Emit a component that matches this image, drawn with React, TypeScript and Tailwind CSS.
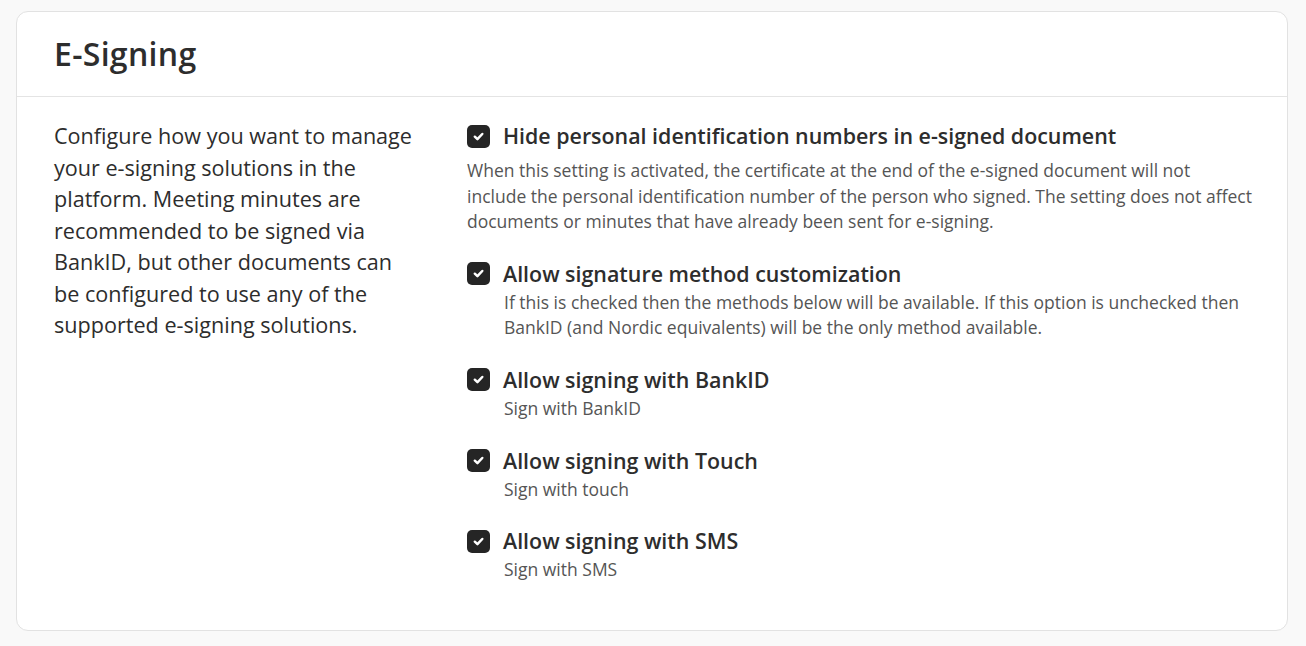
import React from "react";

const Check = () => (
  <div className="w-[23px] h-[23px] rounded-[5px] bg-[#252525] flex items-center justify-center shrink-0">
    <svg width="13" height="13" viewBox="0 0 12 12" fill="none">
      <path d="M2.6 6.2 L5 8.5 L9.5 3.7" stroke="white" strokeWidth="2.3" strokeLinecap="round" strokeLinejoin="round" />
    </svg>
  </div>
);

const items: { label: string; lines: string[]; outdent?: boolean }[] = [
  {
    label: "Hide personal identification numbers in e-signed document",
    lines: [
      "When this setting is activated, the certificate at the end of the e-signed document will not",
      "include the personal identification number of the person who signed. The setting does not affect",
      "documents or minutes that have already been sent for e-signing.",
    ],
    outdent: true,
  },
  {
    label: "Allow signature method customization",
    lines: [
      "If this is checked then the methods below will be available. If this option is unchecked then",
      "BankID (and Nordic equivalents) will be the only method available.",
    ],
  },
  { label: "Allow signing with BankID", lines: ["Sign with BankID"] },
  { label: "Allow signing with Touch", lines: ["Sign with touch"] },
  { label: "Allow signing with SMS", lines: ["Sign with SMS"] },
];

export default function App() {
  return (
    <div className="min-h-[646px] bg-[#f9f9f9] pt-[11px] pl-4" style={{ fontFamily: "'Open Sans', sans-serif" }}>
      <div className="w-[1272px] bg-white border border-[#e2e2e2] rounded-[12px]">
        <div className="h-[85px] flex items-center pl-[37px] border-b border-[#e4e4e4]">
          <h1 className="text-[32px] font-semibold text-[#2d2d2d] tracking-[0.3px]">E-Signing</h1>
        </div>
        <div className="flex pt-[23px] pb-[47px] pl-[37px]">
          <p className="w-[362px] text-[21.6px] leading-[31.5px] text-[#2d2d2d]">
            Configure how you want to manage your e-signing solutions in the platform. Meeting minutes are recommended to be signed via BankID, but other documents can be configured to use any of the supported e-signing solutions.
          </p>
          <div className="ml-[51px] w-[800px] flex flex-col gap-[23px]">
            {items.map((it) => (
              <div key={it.label}>
                <div className="flex items-center gap-[13px] h-[32px]">
                  <Check />
                  <span className="text-[21.4px] font-semibold text-[#2d2d2d]">{it.label}</span>
                </div>
                <div
                  className={
                    it.outdent
                      ? "mt-[6px] text-[17.5px] leading-[25.6px] text-[#555]"
                      : "pl-[37px] text-[17.5px] leading-[25.6px] text-[#555]"
                  }
                >
                  {it.lines.map((l) => (
                    <p key={l} className="whitespace-nowrap">{l}</p>
                  ))}
                </div>
              </div>
            ))}
          </div>
        </div>
      </div>
    </div>
  );
}
